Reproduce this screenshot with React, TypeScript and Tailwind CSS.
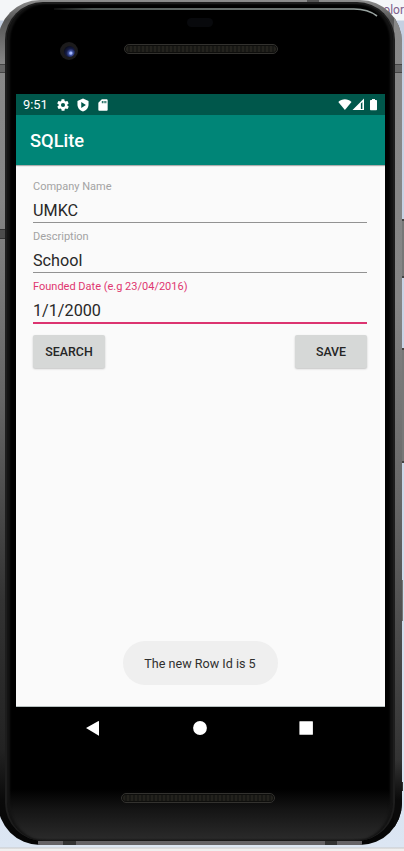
import React from "react";

function Field({ label, value, active = false }: { label: string; value: string; active?: boolean }) {
  return (
    <label className="flex flex-col">
      <span className={`h-[15px] pt-px text-[11px] leading-[14px] whitespace-nowrap ${active ? "text-[#df3770]" : "text-[#a3a3a3]"}`}>
        {label}
      </span>
      <span className={`pt-[6px] text-[16.2px] leading-[22px] text-[#282828] ${active ? "h-[30px] border-b-2 border-[#dc3470]" : "mb-[6px] h-[29px] border-b border-[#929292]"}`}>
        {value}
      </span>
    </label>
  );
}

function Speaker() {
  return (
    <div className="h-[10px] w-[154px] rounded-full border border-[#33322f] bg-[#0e0e0c] p-px">
      <div className="h-full rounded-full bg-[repeating-linear-gradient(90deg,#23221d_0px,#23221d_2px,#181815_2px,#181815_4px)]" />
    </div>
  );
}

function StatusBar() {
  return (
    <div className="flex h-[21px] items-center justify-between bg-[#00574b] pl-[7px] pr-[6px] text-white">
      <div className="flex items-center gap-[6px]">
        <span className="w-[27px] text-[12.9px] leading-[21px]">9:51</span>
        <svg className="h-[14px] w-[14px]" viewBox="0 0 24 24" fill="currentColor">
          <path d="M19.4 13a7.8 7.8 0 0 0 0-2l2.1-1.6c.2-.2.2-.4.1-.6l-2-3.5c-.1-.2-.4-.3-.6-.2l-2.5 1a7 7 0 0 0-1.7-1l-.4-2.6a.5.5 0 0 0-.5-.5h-4a.5.5 0 0 0-.5.5l-.4 2.6a7 7 0 0 0-1.7 1l-2.5-1c-.2-.1-.5 0-.6.2l-2 3.5c-.1.2-.1.5.1.6L4.6 11a7.8 7.8 0 0 0 0 2l-2.1 1.6c-.2.2-.2.4-.1.6l2 3.5c.1.2.4.3.6.2l2.5-1c.5.4 1.1.7 1.7 1l.4 2.6c0 .3.2.5.5.5h4c.3 0 .5-.2.5-.5l.4-2.6a7 7 0 0 0 1.7-1l2.5 1c.2.1.5 0 .6-.2l2-3.5c.1-.2.1-.5-.1-.6L19.4 13ZM12 15.5a3.5 3.5 0 1 1 0-7 3.5 3.5 0 0 1 0 7Z" />
        </svg>
        <svg className="h-[14px] w-[14px]" viewBox="0 0 24 24" fill="currentColor" fillRule="evenodd">
          <path d="M12 1 2.5 5v6c0 5.5 4 10.7 9.5 12 5.5-1.3 9.5-6.5 9.5-12V5L12 1ZM9 7l8 5-8 5V7Z" />
        </svg>
        <svg className="h-[14px] w-[14px]" viewBox="0 0 24 24" fill="currentColor" fillRule="evenodd">
          <path d="M18 2h-8L4 8v12c0 1.1.9 2 2 2h12c1.1 0 2-.9 2-2V4c0-1.1-.9-2-2-2ZM10 5h1.7v4H10V5Zm3 0h1.7v4H13V5Zm3 0h1.7v4H16V5Z" />
        </svg>
      </div>
      <svg className="h-[13px] w-[41px]" viewBox="0 0 41 13" fill="currentColor">
        <path d="M0.3 4.1C3.9.4 9.9.4 13.5 4.1L6.9 12Z" />
        <path fillRule="evenodd" d="M14.500 12 26 0.600V12ZM22.900 5.500V11H24.400V4Z" />
        <path d="M34 1h3v1h1.200c.5 0 .8.300.8.800v8.700c0 .5-.3.800-.8.800h-5.400c-.5 0-.8-.3-.8-.8V2.800c0-.5.300-.8.800-.8H34Z" />
      </svg>
    </div>
  );
}

const buttonStyle =
  "h-[33px] w-[72px] rounded-[2px] bg-[#d6d8d7] pt-[2px] text-[12.4px] font-medium text-[#252525] shadow-[0_1px_2px_rgba(0,0,0,0.22)]";

function Screen() {
  return (
    <main className="flex h-[613px] shrink-0 flex-col border-b border-[#b7c0bf] bg-[#fafafa]">
      <StatusBar />
      <header className="flex h-[50px] items-center bg-[#008577] pl-[14px] pt-[2px] text-[18.3px] font-medium text-white shadow-[0_1px_1px_rgba(0,0,0,0.3)]">
        SQLite
      </header>
      <form className="flex grow flex-col pt-[14px] pl-[17px] pr-[18px]">
        <Field label="Company Name" value="UMKC" />
        <Field label="Description" value="School" />
        <Field label="Founded Date (e.g 23/04/2016)" value="1/1/2000" active />
        <div className="flex justify-between pt-[11px]">
          <button type="button" className={buttonStyle}>SEARCH</button>
          <button type="button" className={buttonStyle}>SAVE</button>
        </div>
      </form>
      <div className="mb-[21px] mr-px flex h-[44px] w-[155px] items-center justify-center self-center rounded-[22px] bg-[#efefef] pt-[2px] text-[12.6px] text-[#303030]">
        The new Row Id is 5
      </div>
    </main>
  );
}

function Earpiece() {
  return (
    <div className="flex h-[90px] shrink-0 flex-col">
      <svg className="h-[14px] w-[369px] shrink-0" viewBox="0 0 369 14" fill="none">
        <defs>
          <linearGradient id="glint" x1="38" x2="363" y1="0" y2="0" gradientUnits="userSpaceOnUse">
            <stop offset="0" stopColor="#111" />
            <stop offset=".12" stopColor="#687370" />
            <stop offset=".5" stopColor="#87918e" />
            <stop offset="1" stopColor="#9ba5a2" />
          </linearGradient>
        </defs>
        <path d="M38 5H338Q352 5 361 12" stroke="url(#glint)" strokeWidth="1.6" />
      </svg>
      <div className="ml-[171px] h-[9px] w-[26px] rounded-full bg-[#08090c]" />
      <div className="flex items-start gap-[46px] pl-[44px] pt-[15px]">
        <div className="flex h-[18px] w-[18px] items-center justify-center rounded-full bg-[#1c1b1c]">
          <div className="h-[11px] w-[11px] rounded-full bg-[radial-gradient(circle_at_62%_65%,#a6b9ff_0_10%,#4053a1_22%,#161c46_45%,#080a15_80%)]" />
        </div>
        <div className="pt-[2px]"><Speaker /></div>
      </div>
    </div>
  );
}

function Handset() {
  return (
    <div className="-ml-[2px] grid h-[845px] w-[404px] overflow-hidden rounded-[42px] bg-[linear-gradient(#8d8d8d_0px,#555_20px,#888_65px,#858585_200px,#656565_400px,#333_600px,#222_750px,#0a0a0a_800px,#050505_841px)] [grid-area:1/1]">
      <div className="flex justify-between [grid-area:1/1]">
        <div className="flex w-[7px] flex-col gap-[156px] pl-[2px] pt-[64px]">
          <div className="h-[9px] border-y border-[#444] bg-[#666]" />
          <div className="h-[10px] border-y border-[#333] bg-[#4c4c4c]" />
        </div>
        <div className="flex w-[324px] flex-col justify-between">
          <div className="ml-[269px] h-[3px] w-[12px] bg-[#555]" />
          <div className="flex h-[4px] justify-between bg-[#656366] px-[25px]">
            <div className="w-[13px] bg-[#333]" />
            <div className="w-[12px] bg-[#333]" />
          </div>
        </div>
        <div className="flex w-[8px] flex-col bg-[linear-gradient(#888_0px,#858585_300px,#666_500px,#333_760px,#0a0a0a_800px)] pt-[64px]">
          <div className="h-[9px] border-y border-[#444] bg-[#666]" />
        </div>
      </div>
      <div className="mx-[7px] mt-[2px] mb-[4px] flex flex-col rounded-[38px] border-x-2 border-t-2 border-[#1d1d1d] bg-[linear-gradient(#000_0px,#000_785px,#151515_806px,#292929_834px,#101010_839px)] pl-[9px] pr-[8px] shadow-[inset_3px_0_2px_#141414,inset_-3px_0_2px_#141414] [grid-area:1/1]">
        <Earpiece />
        <Screen />
        <svg className="h-[43px] w-[369px] shrink-0" viewBox="0 0 369 43" fill="white">
          <path d="M70 21 82.500 14Q83 14 83 14.500V28.500Q83 29 82.500 28.500Z" />
          <circle cx="184" cy="21" r="6.900" />
          <rect x="283.400" y="14.300" width="13.500" height="13.500" rx=".5" />
        </svg>
        <div className="pl-[105px] pt-[43px]"><Speaker /></div>
      </div>
    </div>
  );
}

export default function App() {
  return (
    <div className="grid h-[851px] w-[404px] overflow-hidden bg-[linear-gradient(#f4f6f8_0px,#f4f6f8_20px,#c5d0e2_21px,#c9d5e7_400px,#dce6f3_847px,#c9c9c9_848px,#f0f0f0_849px)] font-[Roboto,sans-serif]">
      <div className="flex flex-col items-end [grid-area:1/1]">
        <span className="h-[219px] pt-[1px] text-[12px] leading-[18px] text-[#80608a]">olor</span>
        <div className="h-[59px] w-[3px] border-y-2 border-[#444] bg-[#777]" />
        <div className="mt-[70px] h-[115px] w-[3px] border-y-2 border-[#444] bg-[#777]" />
        <div className="mt-[117px] mr-px h-[41px] w-[2px] bg-[#777]" />
        <div className="mt-[161px] mr-px h-[9px] w-[2px] bg-[#333]" />
      </div>
      <Handset />
    </div>
  );
}
